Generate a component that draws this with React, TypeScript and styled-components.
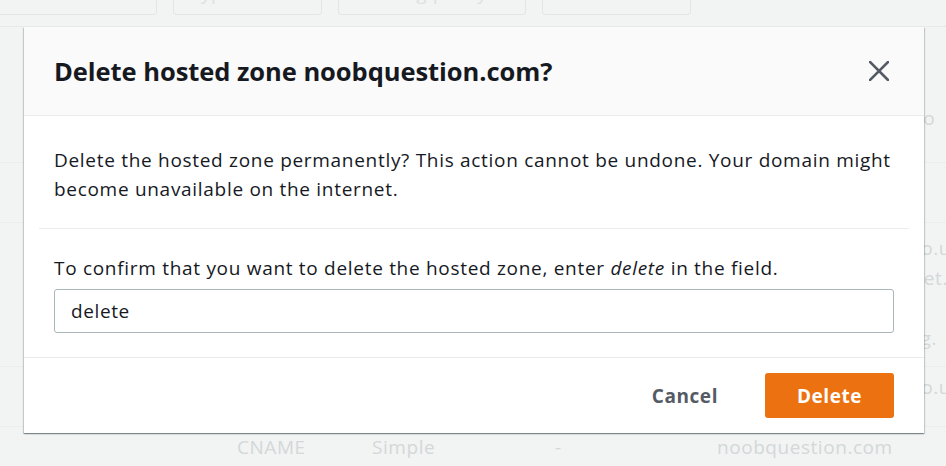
import React from "react";
import styled, { createGlobalStyle } from "styled-components";

const GlobalStyle = createGlobalStyle`
  html, body { margin: 0; padding: 0; }
  body {
    background: #f2f3f3;
    font-family: "Open Sans", "Liberation Sans", Arial, sans-serif;
    overflow: hidden;
  }
  * { box-sizing: border-box; }
`;

const Page = styled.div`
  position: relative;
  width: 946px;
  height: 466px;
  overflow: hidden;
  background: #f2f3f3;
`;

const Backdrop = styled.div`
  display: flex;
  flex-direction: column;
  color: #d3d8d8;
  font-size: 19px;
  letter-spacing: 0.55px;
`;

const FilterBar = styled.div`
  display: flex;
  align-items: flex-start;
  gap: 16px;
  margin-top: -22px;
  height: 49px;
  border-bottom: 1px solid #e6e9e9;
`;

const FilterBox = styled.div<{ $w: number; $ml?: number }>`
  width: ${(p) => p.$w}px;
  margin-left: ${(p) => p.$ml ?? 0}px;
  height: 37px;
  border: 1px solid #e3e6e6;
  border-radius: 3px;
  padding: 1px 16px;
  color: #dde1e1;
  white-space: nowrap;
  overflow: hidden;
`;

const Row = styled.div<{ $h: number; $pt: number }>`
  display: flex;
  align-items: flex-start;
  height: ${(p) => p.$h}px;
  padding-top: ${(p) => p.$pt}px;
  border-bottom: 1px solid #ebeeee;
  white-space: nowrap;
  line-height: 30px;
`;

const Cell = styled.div<{ $w: number }>`
  width: ${(p) => p.$w}px;
  flex: none;
`;

const Overlay = styled.div`
  position: absolute;
  inset: 0;
  padding: 27px 0 0 24px;
`;

const Modal = styled.div`
  width: 900px;
  background: #ffffff;
  box-shadow: 0 1px 1px 0 rgba(0, 28, 36, 0.3), 1px 1px 1px 0 rgba(0, 28, 36, 0.15),
    -1px 1px 1px 0 rgba(0, 28, 36, 0.15);
  color: #16191f;
`;

const Header = styled.div`
  height: 89px;
  display: flex;
  align-items: center;
  justify-content: space-between;
  padding: 0 30px;
  background: #fafafa;
  border-bottom: 1px solid #eaeded;
`;

const Title = styled.h2`
  margin: 0;
  font-size: 25.5px;
  font-weight: 700;
  color: #16191f;
  letter-spacing: -0.05px;
`;

const CloseButton = styled.button`
  width: 30px;
  height: 30px;
  border: 0;
  padding: 0;
  background: none;
  display: flex;
  align-items: center;
  justify-content: center;
  color: #545b64;
  cursor: pointer;
`;

const Section = styled.div<{ $pt: number; $pb: number }>`
  padding: ${(p) => p.$pt}px 30px ${(p) => p.$pb}px;
`;

const Text = styled.p`
  margin: 0;
  font-size: 19px;
  letter-spacing: 0.7px;
  line-height: 29px;
  color: #16191f;
`;

const Divider = styled.hr`
  margin: 0 15px;
  border: 0;
  border-top: 1px solid #eaeded;
`;

const Input = styled.input`
  display: block;
  width: 100%;
  height: 44px;
  margin-top: 6px;
  border: 1px solid #aab7b8;
  border-radius: 3px;
  padding: 0 16px;
  font-family: inherit;
  font-size: 19px;
  letter-spacing: 0.6px;
  color: #16191f;
  background: #fff;
  outline: none;
`;

const Footer = styled.div`
  display: flex;
  justify-content: flex-end;
  align-items: center;
  gap: 27px;
  padding: 15px 30px 15px;
  border-top: 1px solid #eaeded;
`;

const Button = styled.button<{ $primary?: boolean }>`
  height: 45px;
  min-width: ${(p) => (p.$primary ? "129px" : "auto")};
  padding: 0 20px;
  border-radius: 3px;
  border: 0;
  font-family: inherit;
  font-size: 19px;
  letter-spacing: 0.55px;
  font-weight: 700;
  color: ${(p) => (p.$primary ? "#ffffff" : "#545b64")};
  background: ${(p) => (p.$primary ? "#ec7211" : "transparent")};
  cursor: pointer;
`;

const CloseIcon = () => (
  <svg width="20" height="20" viewBox="0 0 20 20" fill="none">
    <path d="M1 1 L19 19 M19 1 L1 19" stroke="currentColor" strokeWidth="2.6" strokeLinecap="square" />
  </svg>
);

export default function App() {
  return (
    <Page>
      <GlobalStyle />
      <Backdrop aria-hidden="true">
        <FilterBar>
          <FilterBox $w={175} $ml={-18}>Name</FilterBox>
          <FilterBox $w={149}>Type</FilterBox>
          <FilterBox $w={188}>Routing policy</FilterBox>
          <FilterBox $w={149}>Alias</FilterBox>
        </FilterBar>
        <Row $h={136} $pt={76}>
          <Cell $w={735} />
          <Cell $w={300}>Value/Route traffic to</Cell>
        </Row>
        <Row $h={60} $pt={15}>
          <Cell $w={717} />
          <Cell $w={300} />
        </Row>
        <Row $h={144} $pt={10}>
          <Cell $w={727} />
          <Cell $w={300}>
            ns-1536.awsdns-00.co.uk.
            <br />
            ns-1024.awsdns-00.net.
            <br />
            ns-0.awsdns-00.com.
            <br />
            ns-512.awsdns-00.org.
          </Cell>
        </Row>
        <Row $h={60} $pt={5}>
          <Cell $w={727} />
          <Cell $w={300}>ns-1536.awsdns-00.co.uk.</Cell>
        </Row>
        <Row $h={80} $pt={5}>
          <Cell $w={237} />
          <Cell $w={135}>CNAME</Cell>
          <Cell $w={183}>Simple</Cell>
          <Cell $w={162}>-</Cell>
          <Cell $w={300}>noobquestion.com</Cell>
        </Row>
      </Backdrop>
      <Overlay>
        <Modal role="dialog" aria-modal="true">
          <Header>
            <Title>Delete hosted zone noobquestion.com?</Title>
            <CloseButton aria-label="Close">
              <CloseIcon />
            </CloseButton>
          </Header>
          <Section $pt={30} $pb={24}>
            <Text>
              Delete the hosted zone permanently? This action cannot be undone. Your domain might
              become unavailable on the internet.
            </Text>
          </Section>
          <Divider />
          <Section $pt={25} $pb={24}>
            <Text>
              To confirm that you want to delete the hosted zone, enter <em>delete</em> in the field.
            </Text>
            <Input defaultValue="delete" />
          </Section>
          <Footer>
            <Button>Cancel</Button>
            <Button $primary>Delete</Button>
          </Footer>
        </Modal>
      </Overlay>
    </Page>
  );
}
